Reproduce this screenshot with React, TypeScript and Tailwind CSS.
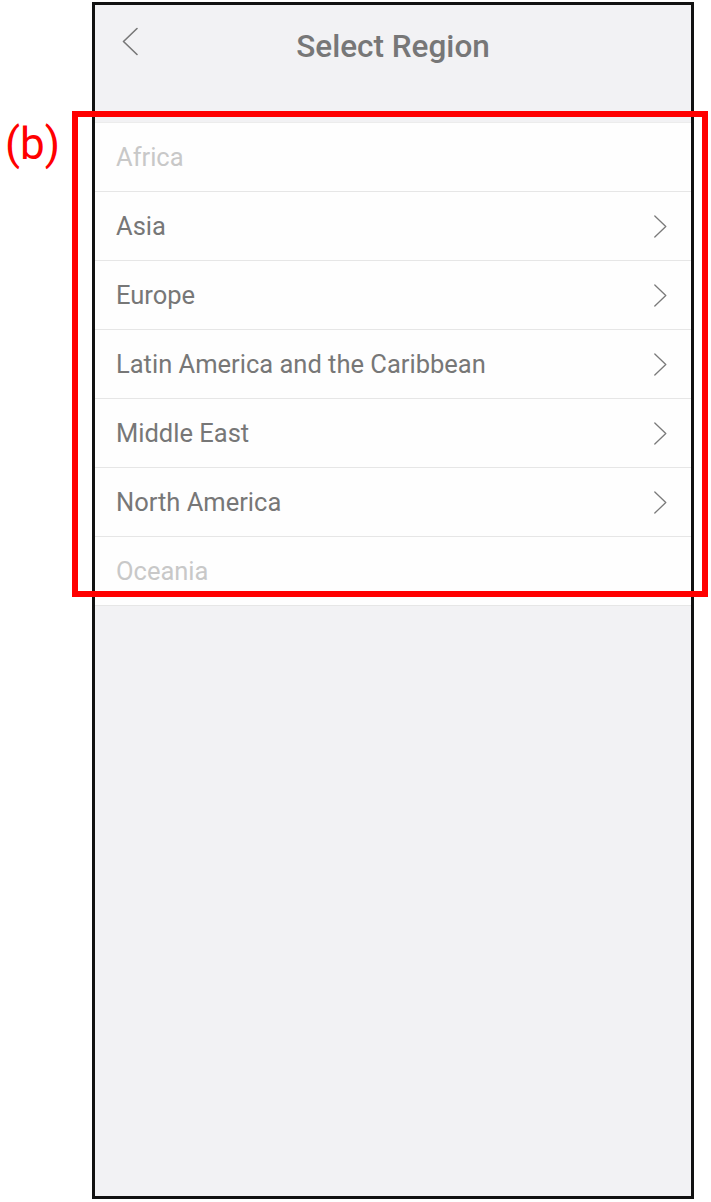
import React from "react";

const regions = [
  { name: "Africa", enabled: false },
  { name: "Asia", enabled: true },
  { name: "Europe", enabled: true },
  { name: "Latin America and the Caribbean", enabled: true },
  { name: "Middle East", enabled: true },
  { name: "North America", enabled: true },
  { name: "Oceania", enabled: false },
];

const Chevron = ({ dir, className }: { dir: "left" | "right"; className?: string }) => (
  <svg viewBox="0 0 16 28" className={className} fill="none" stroke="currentColor" strokeWidth={1.6} strokeLinecap="round" strokeLinejoin="round">
    {dir === "left" ? <path d="M15 1 L1.5 14 L15 27" /> : <path d="M1 1 L14.5 14 L1 27" />}
  </svg>
);

const RegionRow = ({ name, enabled }: { name: string; enabled: boolean }) => (
  <div className="flex h-[69px] items-center justify-between border-b border-[#e6e6e6] bg-[#fefefe] pl-[21px] pr-[24px]">
    <span className={`text-[25.5px] ${enabled ? "text-[#777777]" : "text-[#c8c8c8]"}`}>{name}</span>
    {enabled && <Chevron dir="right" className="h-[23px] w-[13px] text-[#7a7a7a]" />}
  </div>
);

export default function App() {
  return (
    <div className="relative min-h-[1202px] bg-white pl-[92px] pt-[2px] font-['Roboto',sans-serif]">
      <div className="flex h-[1197px] w-[602px] flex-col border-[3px] border-[#111] bg-[#f2f2f4]">
        <div className="h-[117px]">
          <div className="relative flex h-[83px] items-center justify-center">
            <div className="absolute left-[27px] top-[22px]">
              <Chevron dir="left" className="h-[29px] w-[16px] text-[#777777]" />
            </div>
            <h1 className="text-[31.5px] font-medium text-[#777777]">Select Region</h1>
          </div>
        </div>
        <div className="border-t border-[#ececec]">
          {regions.map((r) => (
            <RegionRow key={r.name} name={r.name} enabled={r.enabled} />
          ))}
        </div>
      </div>

      {/* annotation overlay */}
      <div className="pointer-events-none absolute left-[72px] top-[111px] h-[486px] w-[636px] border-[6px] border-[#ff0000]" />
      <span className="absolute left-[5px] top-[114px] text-[44px] leading-[60px] text-[#ff0000]">(b)</span>
    </div>
  );
}
